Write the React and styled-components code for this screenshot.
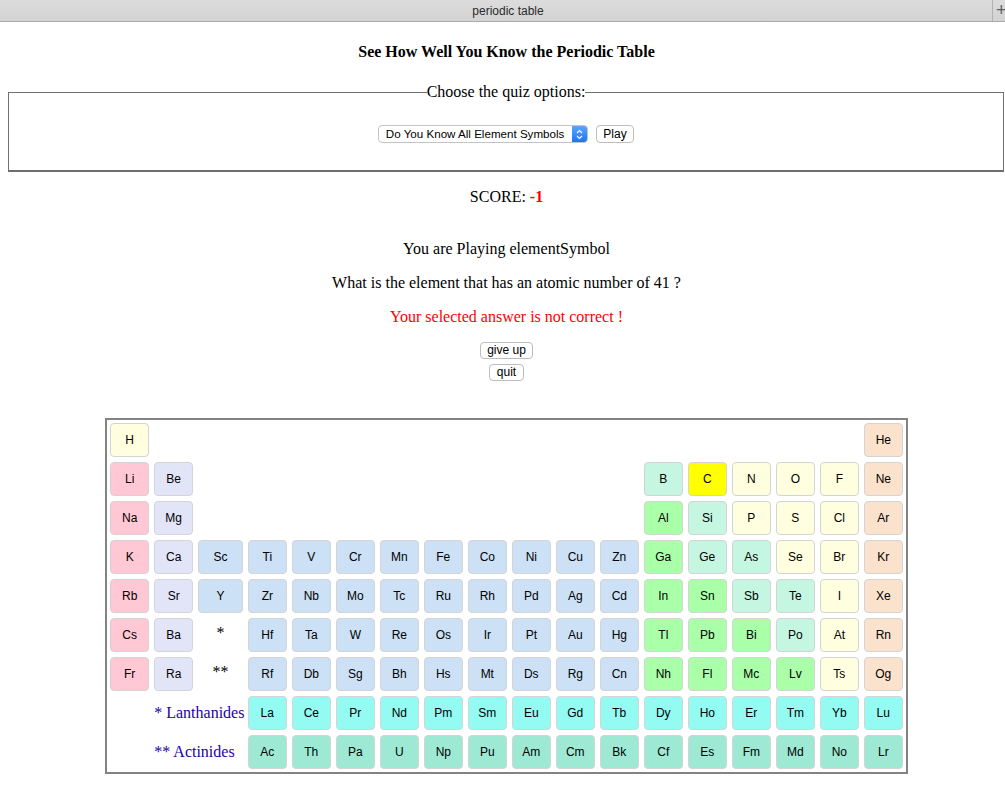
import React from "react";
import styled, { createGlobalStyle } from "styled-components";

const GlobalStyle = createGlobalStyle`
  html, body { margin: 0; padding: 0; background: #fff; overflow: hidden; }
  body { font-family: "Liberation Serif", "Times New Roman", serif; font-size: 16px; color: #000; }
`;

const COLORS = {
  nonmetal: "#ffffe0",
  selected: "#ffff00",
  alkali: "#ffc8d4",
  alkaline: "#e2e5f8",
  transition: "#cce1f5",
  metalloid: "#c5f6e2",
  post: "#aaffa9",
  noble: "#fae2cd",
  lanth: "#93fbf2",
  actin: "#9ee9d3",
};

const TabBar = styled.div`
  display: flex;
  width: 1005px;
  height: 21px;
  background: linear-gradient(#dddcdd, #d4d3d4);
  border-bottom: 1px solid #a9a9a9;
  font-family: "Liberation Sans", Arial, sans-serif;
  font-size: 12px;
  color: #2a2a2a;
`;

const Tab = styled.div`
  flex: 1;
  display: flex;
  align-items: center;
  justify-content: center;
  padding-left: 24px;
`;

const NewTab = styled.div`
  width: 9px;
  border-left: 1px solid #b2b2b2;
  display: flex;
  align-items: center;
  padding-left: 3px;
  font-size: 18px;
  font-weight: 300;
  color: #606060;
  overflow: hidden;
`;

const Page = styled.div`
  width: 997px;
  padding: 0 0 0 8px;
`;

const Title = styled.h4`
  margin: 21px 0 0;
  font-size: 16px;
  line-height: 18px;
  font-weight: bold;
  text-align: center;
`;

const Fieldset = styled.fieldset`
  box-sizing: border-box;
  width: 996px;
  margin: 22px 0 0;
  padding: 24px 0 27px;
  border: 1px solid #727272;
  border-bottom: 2px solid #6e6e6e;
  text-align: center;
`;

const Legend = styled.legend`
  margin: 0 auto;
  padding: 0;
  font-size: 16px;
  line-height: 18px;
`;

const Controls = styled.div`
  display: flex;
  justify-content: center;
  align-items: center;
  gap: 8px;
`;

const SelectWrap = styled.div`
  display: flex;
  width: 210px;
  height: 18px;
  box-sizing: border-box;
  border: 1px solid #c4c4c4;
  border-radius: 4px;
  background: #fff;
  overflow: hidden;
`;

const Select = styled.select`
  flex: 1;
  appearance: none;
  -webkit-appearance: none;
  border: none;
  outline: none;
  background: transparent;
  margin: 0;
  padding: 0 0 0 7px;
  font-family: "Liberation Sans", Arial, sans-serif;
  font-size: 11.6px;
  line-height: 16px;
  color: #000;
`;

const Stepper = styled.div`
  width: 15px;
  display: flex;
  align-items: center;
  justify-content: center;
  background: linear-gradient(#5aa6fb, #1f74f2);
`;

const Button = styled.button`
  height: ${(p) => p.$h || 17}px;
  box-sizing: border-box;
  padding: 0 6.5px;
  border: 1px solid #bdbdbd;
  border-radius: 4px;
  background: #fff;
  font-family: "Liberation Sans", Arial, sans-serif;
  font-size: 12px;
  line-height: 15px;
  color: #000;
`;

const Line = styled.p`
  margin: ${(p) => p.$top}px 0 0;
  font-size: 16px;
  line-height: 18px;
  text-align: center;
  color: ${(p) => p.$color || "#000"};
`;

const ScoreValue = styled.b`
  color: #ff0000;
`;

const ButtonStack = styled.div`
  margin-top: 16px;
  display: flex;
  flex-direction: column;
  align-items: center;
  gap: 5px;
`;

const TableRow = styled.div`
  display: flex;
  justify-content: center;
  margin-top: 37px;
`;

const TableFrame = styled.div`
  border: 2px solid #838383;
  padding: 3px;
`;

const Grid = styled.div`
  display: grid;
  grid-template-columns: 39px 39px 44.6px repeat(15, 39px);
  grid-template-rows: repeat(9, 34px);
  gap: 5px;
`;

const Cell = styled.div`
  grid-row: ${(p) => p.$row};
  grid-column: ${(p) => p.$col};
  box-sizing: border-box;
  border: 1px solid #d4d4d4;
  border-radius: 4px;
  background: ${(p) => p.$bg};
  display: flex;
  align-items: center;
  justify-content: center;
  font-family: "Liberation Sans", Arial, sans-serif;
  font-size: 12px;
  color: #000;
`;

const Marker = styled.div`
  grid-row: ${(p) => p.$row};
  grid-column: 3;
  display: flex;
  align-items: center;
  justify-content: center;
  font-size: 16px;
  padding-bottom: 4px;
`;

const SeriesLabel = styled.div`
  grid-row: ${(p) => p.$row};
  grid-column: 2 / span 2;
  display: flex;
  align-items: center;
  white-space: nowrap;
  font-size: 16px;
  color: #2400a6;
`;

const tm = (syms) => syms.split(" ");

const rows = [
  [["H", 1, "nonmetal"], ["He", 18, "noble"]],
  [["Li", 1, "alkali"], ["Be", 2, "alkaline"], ["B", 13, "metalloid"], ["C", 14, "selected"], ["N", 15, "nonmetal"], ["O", 16, "nonmetal"], ["F", 17, "nonmetal"], ["Ne", 18, "noble"]],
  [["Na", 1, "alkali"], ["Mg", 2, "alkaline"], ["Al", 13, "post"], ["Si", 14, "metalloid"], ["P", 15, "nonmetal"], ["S", 16, "nonmetal"], ["Cl", 17, "nonmetal"], ["Ar", 18, "noble"]],
  [["K", 1, "alkali"], ["Ca", 2, "alkaline"], ...tm("Sc Ti V Cr Mn Fe Co Ni Cu Zn").map((s, i) => [s, 3 + i, "transition"]), ["Ga", 13, "post"], ["Ge", 14, "metalloid"], ["As", 15, "metalloid"], ["Se", 16, "nonmetal"], ["Br", 17, "nonmetal"], ["Kr", 18, "noble"]],
  [["Rb", 1, "alkali"], ["Sr", 2, "alkaline"], ...tm("Y Zr Nb Mo Tc Ru Rh Pd Ag Cd").map((s, i) => [s, 3 + i, "transition"]), ["In", 13, "post"], ["Sn", 14, "post"], ["Sb", 15, "metalloid"], ["Te", 16, "metalloid"], ["I", 17, "nonmetal"], ["Xe", 18, "noble"]],
  [["Cs", 1, "alkali"], ["Ba", 2, "alkaline"], ...tm("Hf Ta W Re Os Ir Pt Au Hg").map((s, i) => [s, 4 + i, "transition"]), ["Tl", 13, "post"], ["Pb", 14, "post"], ["Bi", 15, "post"], ["Po", 16, "metalloid"], ["At", 17, "nonmetal"], ["Rn", 18, "noble"]],
  [["Fr", 1, "alkali"], ["Ra", 2, "alkaline"], ...tm("Rf Db Sg Bh Hs Mt Ds Rg Cn").map((s, i) => [s, 4 + i, "transition"]), ["Nh", 13, "post"], ["Fl", 14, "post"], ["Mc", 15, "post"], ["Lv", 16, "post"], ["Ts", 17, "nonmetal"], ["Og", 18, "noble"]],
  tm("La Ce Pr Nd Pm Sm Eu Gd Tb Dy Ho Er Tm Yb Lu").map((s, i) => [s, 4 + i, "lanth"]),
  tm("Ac Th Pa U Np Pu Am Cm Bk Cf Es Fm Md No Lr").map((s, i) => [s, 4 + i, "actin"]),
];

const StepperIcon = () => (
  <svg width="7" height="11" viewBox="0 0 7 11">
    <path d="M1 4 L3.5 1.5 L6 4" fill="none" stroke="#fff" strokeWidth="1.2" />
    <path d="M1 7 L3.5 9.5 L6 7" fill="none" stroke="#fff" strokeWidth="1.2" />
  </svg>
);

export default function App() {
  return (
    <>
      <GlobalStyle />
      <TabBar>
        <Tab>periodic table</Tab>
        <NewTab>+</NewTab>
      </TabBar>
      <Page>
        <Title>See How Well You Know the Periodic Table</Title>
        <Fieldset>
          <Legend>Choose the quiz options:</Legend>
          <Controls>
            <SelectWrap>
              <Select defaultValue="symbols">
                <option value="symbols">Do You Know All Element Symbols</option>
              </Select>
              <Stepper>
                <StepperIcon />
              </Stepper>
            </SelectWrap>
            <Button $h={18}>Play</Button>
          </Controls>
        </Fieldset>
        <Line $top={16}>
          SCORE: <ScoreValue>-1</ScoreValue>
        </Line>
        <Line $top={34}>You are Playing elementSymbol</Line>
        <Line $top={16}>What is the element that has an atomic number of 41 ?</Line>
        <Line $top={16} $color="#ff0000">
          Your selected answer is not correct !
        </Line>
        <ButtonStack>
          <Button>give up</Button>
          <Button>quit</Button>
        </ButtonStack>
        <TableRow>
          <TableFrame>
            <Grid>
              {rows.map((row, r) =>
                row.map(([sym, col, cat]) => (
                  <Cell key={sym} $row={r + 1} $col={col} $bg={COLORS[cat]}>
                    {sym}
                  </Cell>
                ))
              )}
              <Marker $row={6}>*</Marker>
              <Marker $row={7}>**</Marker>
              <SeriesLabel $row={8}>* Lanthanides</SeriesLabel>
              <SeriesLabel $row={9}>** Actinides</SeriesLabel>
            </Grid>
          </TableFrame>
        </TableRow>
      </Page>
    </>
  );
}
